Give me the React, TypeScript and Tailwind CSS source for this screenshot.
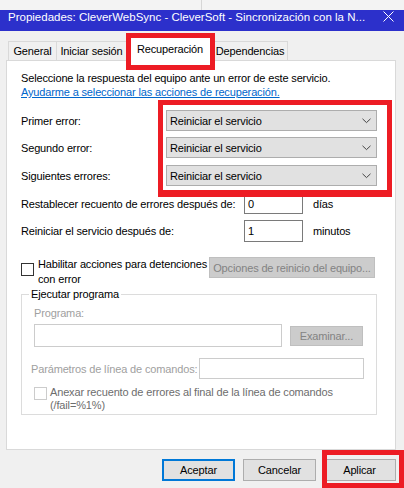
import React from 'react';

const font = { fontFamily: "'Segoe UI', 'Liberation Sans', Arial, sans-serif" };

function Chevron() {
  return (
    <svg width="9" height="6" viewBox="0 0 9 6" className="shrink-0">
      <polyline points="0.5,0.8 4.5,4.6 8.5,0.8" fill="none" stroke="#444" strokeWidth="1" />
    </svg>
  );
}

function Select() {
  return (
    <div className="w-[211px] h-[21px] bg-[#e1e1e1] border border-[#adadad] flex items-center justify-between pl-[3px] pr-[5px]">
      <span>Reiniciar el servicio</span>
      <Chevron />
    </div>
  );
}

function SelectRow({ label, className }: { label: string; className?: string }) {
  return (
    <div className={`flex items-center h-[21px] ${className ?? ''}`}>
      <span className="w-[145px] whitespace-nowrap">{label}</span>
      <Select />
    </div>
  );
}

function Tab({ label, w, active }: { label: string; w: string; active?: boolean }) {
  if (active) {
    return (
      <div className={`${w} h-[24px] -mb-px relative z-10 bg-white border border-b-0 border-[#d9d9d9] flex items-center justify-center pb-[1px]`}>
        {label}
      </div>
    );
  }
  return (
    <div className={`${w} h-[19px] border border-b-0 border-[#d9d9d9] -ml-px first:ml-0 flex items-center justify-center`}>
      {label}
    </div>
  );
}

export default function App() {
  return (
    <div style={font} className="relative w-[404px] h-[488px] overflow-hidden bg-[#f0f0f0] text-[11px] leading-[14px] tracking-[-0.15px] text-black">
      {/* strip above the window */}
      <div className="h-[10px] flex bg-[#f3f3f3]">
        <div className="ml-[201px] w-px h-full bg-[#d6d6d6]" />
      </div>

      {/* title bar */}
      <div className="h-[21px] bg-[#2c30cb] flex items-start text-white text-[11.5px] tracking-normal pl-[8px] pr-[10px]">
        <span className="flex-1 whitespace-nowrap overflow-hidden">
          Propiedades: CleverWebSync - CleverSoft - Sincronización con la N...
        </span>
        <svg width="11" height="11" viewBox="0 0 11 11" className="mt-[1px]">
          <path d="M0.5 0.5 L10.5 10.5 M10.5 0.5 L0.5 10.5" stroke="#fff" strokeWidth="1" />
        </svg>
      </div>

      {/* tabs */}
      <div className="mt-[6px] h-[23px] pl-[8px] flex items-end">
        <Tab label="General" w="w-[49px]" />
        <Tab label="Iniciar sesión" w="w-[71px]" />
        <Tab label="Recuperación" w="w-[86px]" active />
        <Tab label="Dependencias" w="w-[76px]" />
      </div>

      {/* panel */}
      <div className="ml-[6px] w-[390px] h-[390px] bg-white border border-[#d9d9d9] pl-[14px] pt-[10px]">
        <div className="whitespace-nowrap">Seleccione la respuesta del equipo ante un error de este servicio.</div>
        <div className="text-[#0066cc] underline whitespace-nowrap w-fit">Ayudarme a seleccionar las acciones de recuperación.</div>

        <SelectRow label="Primer error:" className="mt-[11px]" />
        <SelectRow label="Segundo error:" className="mt-[6px]" />
        <SelectRow label="Siguientes errores:" className="mt-[7px]" />

        <div className="flex items-center h-[21px] mt-[7px]">
          <span className="w-[223px] whitespace-nowrap">Restablecer recuento de errores después de:</span>
          <div className="w-[59px] h-[21px] border border-[#7a7a7a] pl-[3px] flex items-center">0</div>
          <span className="ml-[10px]">días</span>
        </div>
        <div className="flex items-center h-[22px] mt-[6px]">
          <span className="w-[223px] whitespace-nowrap">Reiniciar el servicio después de:</span>
          <div className="w-[59px] h-[22px] border border-[#7a7a7a] pl-[3px] flex items-center">1</div>
          <span className="ml-[10px]">minutos</span>
        </div>

        <div className="flex items-start mt-[15px]">
          <div className="w-[13px] h-[13px] border border-[#333] mt-[6px] shrink-0" />
          <div className="ml-[4px] w-[167px] leading-[15px] whitespace-nowrap">
            Habilitar acciones para detenciones
            <br />
            con error
          </div>
          <div className="ml-[4px] w-[166px] h-[21px] bg-[#cccccc] border border-[#bfbfbf] text-[#838383] flex items-center justify-center whitespace-nowrap">
            Opciones de reinicio del equipo...
          </div>
        </div>

        <fieldset className="w-[356px] border border-[#dcdcdc] pb-[2px]">
          <legend className="ml-[7px] px-[2px]">Ejecutar programa</legend>
          <div className="pl-[12px]">
            <div className="mt-[5px] text-[#a0a0a0]">Programa:</div>
            <div className="flex items-center mt-[4px]">
              <div className="w-[248px] h-[23px] border border-[#cccccc]" />
              <div className="ml-[8px] w-[73px] h-[20px] bg-[#cccccc] border border-[#bfbfbf] text-[#838383] flex items-center justify-center">
                Examinar...
              </div>
            </div>
            <div className="flex items-center h-[21px] mt-[11px] -ml-[3px]">
              <span className="w-[168px] text-[#a0a0a0] whitespace-nowrap">Parámetros de línea de comandos:</span>
              <div className="w-[165px] h-[21px] border border-[#cccccc]" />
            </div>
            <div className="flex items-start mt-[7px]">
              <div className="w-[13px] h-[13px] border border-[#cccccc] mt-[1px] shrink-0" />
              <div className="ml-[3px] leading-[13px] text-[#6d6d6d] whitespace-nowrap">
                Anexar recuento de errores al final de la línea de comandos
                <br />
                (/fail=%1%)
              </div>
            </div>
          </div>
        </fieldset>
      </div>

      {/* buttons */}
      <div className="flex justify-end mt-[9px] pr-[8px]">
        <div className="w-[73px] h-[22px] bg-[#e1e1e1] border-2 border-[#0078d7] flex items-center justify-center">Aceptar</div>
        <div className="ml-[8px] w-[73px] h-[22px] bg-[#e1e1e1] border border-[#adadad] flex items-center justify-center">Cancelar</div>
        <div className="ml-[7px] w-[73px] h-[22px] bg-[#e1e1e1] border border-[#adadad] flex items-center justify-center">Aplicar</div>
      </div>

      {/* red annotation boxes */}
      <div className="absolute left-[126px] top-[33px] w-[89px] h-[37px] border-[5px] border-[#ed1c24] z-20" />
      <div className="absolute left-[158px] top-[100px] w-[234px] h-[97px] border-[5px] border-b-[7px] border-[#ed1c24] z-20" />
      <div className="absolute left-[322px] top-[450px] w-[82px] h-[38px] border-[5px] border-[#ed1c24] z-20" />
    </div>
  );
}
